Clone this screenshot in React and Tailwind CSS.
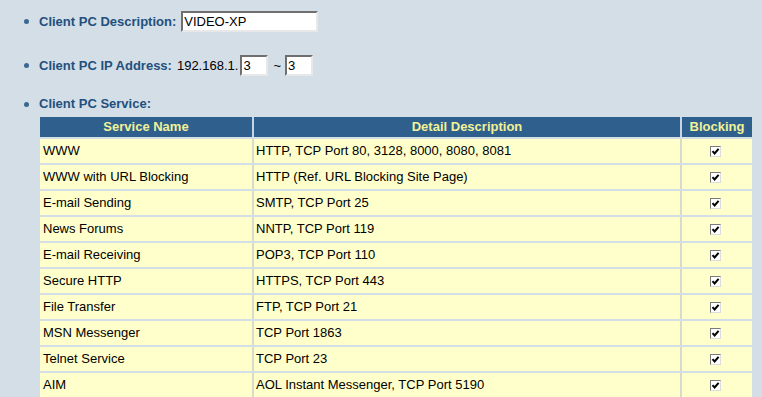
const services = [
  { name: "WWW", detail: "HTTP, TCP Port 80, 3128, 8000, 8080, 8081" },
  { name: "WWW with URL Blocking", detail: "HTTP (Ref. URL Blocking Site Page)" },
  { name: "E-mail Sending", detail: "SMTP, TCP Port 25" },
  { name: "News Forums", detail: "NNTP, TCP Port 119" },
  { name: "E-mail Receiving", detail: "POP3, TCP Port 110" },
  { name: "Secure HTTP", detail: "HTTPS, TCP Port 443" },
  { name: "File Transfer", detail: "FTP, TCP Port 21" },
  { name: "MSN Messenger", detail: "TCP Port 1863" },
  { name: "Telnet Service", detail: "TCP Port 23" },
  { name: "AIM", detail: "AOL Instant Messenger, TCP Port 5190" },
];

function Bullet() {
  return <span className="w-[5px] h-[5px] rounded-full bg-[#3a6792] ml-[24px] mr-[10px] shrink-0" />;
}

function TextBox({ value, className }) {
  return (
    <span
      className={
        "h-[21px] bg-white border-2 border-t-[#6f6f6f] border-l-[#6f6f6f] border-r-[#e8e8e8] border-b-[#e8e8e8] flex items-center pl-[1px] text-[13px] text-black leading-none " +
        className
      }
    >
      {value}
    </span>
  );
}

function Check() {
  return (
    <span className="w-[11px] h-[11px] bg-white border border-t-[#7a7a7a] border-l-[#7a7a7a] border-r-[#dcdcdc] border-b-[#dcdcdc] flex items-center justify-center">
      <svg width="9" height="9" viewBox="0 0 9 9">
        <path d="M1.5 4.2 L3.6 6.5 L7.6 1.8" stroke="#000" strokeWidth="2" fill="none" />
      </svg>
    </span>
  );
}

export default function App() {
  return (
    <div
      className="w-[762px] h-[397px] overflow-hidden bg-[#d4dee6] text-[13px]"
      style={{ fontFamily: '"Liberation Sans", Arial, sans-serif' }}
    >
      {/* Description */}
      <div className="flex items-center pt-[11px] h-[32px]">
        <Bullet />
        <span className="font-bold text-[#22507e] mr-[5px]">Client PC Description:</span>
        <TextBox value="VIDEO-XP" className="w-[137px]" />
      </div>

      {/* IP range */}
      <div className="flex items-center mt-[23px] h-[21px]">
        <Bullet />
        <span className="font-bold text-[#22507e] mr-[5px]">Client PC IP Address:</span>
        <span className="text-black mr-[2px]">192.168.1.</span>
        <TextBox value="3" className="w-[28px]" />
        <span className="text-black ml-[5px] mr-[4px]">~</span>
        <TextBox value="3" className="w-[28px]" />
      </div>

      {/* Services */}
      <div className="flex items-center mt-[20px] h-[16px]">
        <Bullet />
        <span className="font-bold text-[#22507e]">Client PC Service:</span>
      </div>

      <div className="ml-[40px] w-[712px] mt-[5px]">
        <div className="flex h-[20px] bg-[#2e5f8d] text-[#f2f296] font-bold mb-[2px]">
          <div className="w-[212px] flex items-center justify-center">Service Name</div>
          <div className="w-[2px] bg-[#c6d6e6]" />
          <div className="w-[426px] flex items-center justify-center">Detail Description</div>
          <div className="w-[2px] bg-[#c6d6e6]" />
          <div className="flex-1 flex items-center justify-center">Blocking</div>
        </div>
        {services.map((s) => (
          <div key={s.name} className="flex h-[24px] bg-[#ffffcc] text-black mb-[2px]">
            <div className="w-[212px] flex items-center pl-[3px]">{s.name}</div>
            <div className="w-[2px] bg-[#d8dacb]" />
            <div className="w-[426px] flex items-center pl-[2px]">{s.detail}</div>
            <div className="w-[2px] bg-[#d8dacb]" />
            <div className="flex-1 flex items-center justify-center pr-[4px]">
              <Check />
            </div>
          </div>
        ))}
      </div>
    </div>
  );
}
